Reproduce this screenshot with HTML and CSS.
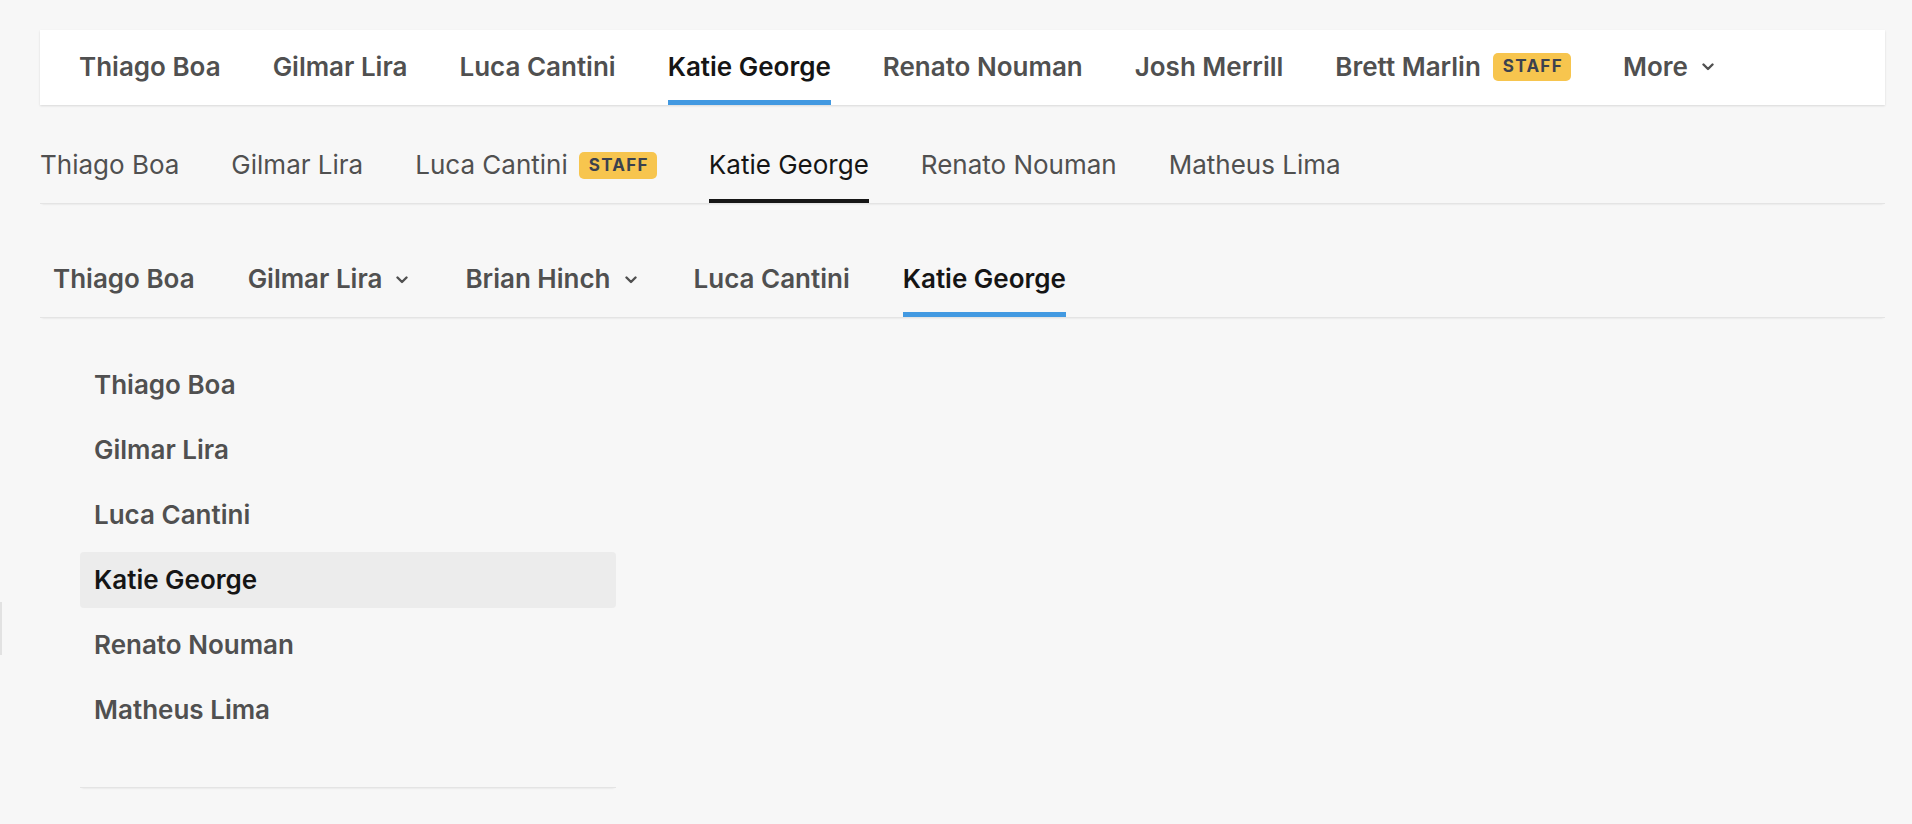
FILE: index.html
```html
<!DOCTYPE html>
<html lang="en">
<head>
<meta charset="utf-8">
<title>Tabs</title>
<link rel="stylesheet" href="styles.css">
</head>
<body>
<div class="edge-mark"></div>
<main class="page">
  <nav class="topbar">
    <a class="top-item">Thiago Boa</a>
    <a class="top-item">Gilmar Lira</a>
    <a class="top-item">Luca Cantini</a>
    <a class="top-item is-active">Katie George</a>
    <a class="top-item">Renato Nouman</a>
    <a class="top-item">Josh Merrill</a>
    <a class="top-item">Brett Marlin <span class="badge">STAFF</span></a>
    <a class="top-item">More <svg class="chev" viewBox="0 0 12 8" width="12" height="8"><path d="M1.5 1.5 L6 6 L10.5 1.5"/></svg></a>
  </nav>

  <nav class="plain-tabs">
    <a class="plain-item">Thiago Boa</a>
    <a class="plain-item">Gilmar Lira</a>
    <a class="plain-item">Luca Cantini <span class="badge">STAFF</span></a>
    <a class="plain-item is-active">Katie George</a>
    <a class="plain-item">Renato Nouman</a>
    <a class="plain-item">Matheus Lima</a>
  </nav>

  <nav class="bold-tabs">
    <a class="bold-item">Thiago Boa</a>
    <a class="bold-item">Gilmar Lira <svg class="chev" viewBox="0 0 12 8" width="12" height="8"><path d="M1.5 1.5 L6 6 L10.5 1.5"/></svg></a>
    <a class="bold-item">Brian Hinch <svg class="chev" viewBox="0 0 12 8" width="12" height="8"><path d="M1.5 1.5 L6 6 L10.5 1.5"/></svg></a>
    <a class="bold-item">Luca Cantini</a>
    <a class="bold-item is-active">Katie George</a>
  </nav>

  <nav class="side-list">
    <a class="side-item">Thiago Boa</a>
    <a class="side-item">Gilmar Lira</a>
    <a class="side-item">Luca Cantini</a>
    <a class="side-item is-active">Katie George</a>
    <a class="side-item">Renato Nouman</a>
    <a class="side-item">Matheus Lima</a>
  </nav>
</main>
</body>
</html>
```

FILE: styles.css
```css
* { box-sizing: border-box; }

html, body {
  margin: 0;
  padding: 0;
  background: #f7f7f7;
}

body {
  font-family: Inter, "Liberation Sans", sans-serif;
  font-size: 26px;
  color: #505050;
  position: relative;
  min-height: 824px;
}

a { cursor: pointer; }

.edge-mark {
  position: absolute;
  left: 0;
  top: 602px;
  width: 2px;
  height: 53px;
  background: #e2e2e2;
}

.page {
  padding: 30px 27px 0 40px;
}

/* ---------- top bar ---------- */
.topbar {
  display: flex;
  gap: 52px;
  height: 75px;
  padding-left: 39px;
  background: #ffffff;
  box-shadow: 0 1px 2px rgba(0, 0, 0, 0.12);
}

.top-item {
  position: relative;
  display: flex;
  align-items: center;
  padding-bottom: 2px;
  font-weight: 600;
  line-height: 32px;
  white-space: nowrap;
}

.top-item.is-active { color: #151515; }

.top-item.is-active::after {
  content: "";
  position: absolute;
  left: 0;
  right: 0;
  bottom: 0;
  height: 5px;
  background: #4299e1;
}

/* ---------- badge ---------- */
.badge {
  display: inline-flex;
  align-items: center;
  height: 28px;
  margin-left: 12px;
  padding: 0 8px 0 10px;
  border-radius: 5px;
  background: #f7c54e;
  color: #3b414e;
  font-size: 17px;
  font-weight: 700;
  letter-spacing: 1.3px;
  line-height: 1;
}

/* ---------- chevron ---------- */
.chev {
  margin-left: 14px;
  fill: none;
  stroke: currentColor;
  stroke-width: 2.4;
  stroke-linecap: round;
  stroke-linejoin: round;
}

/* ---------- plain tabs ---------- */
.plain-tabs {
  display: flex;
  gap: 52px;
  margin-top: 44px;
  border-bottom: 1px solid #e4e4e4;
  box-shadow: 0 2px 2px -2px rgba(0, 0, 0, 0.12);
}

.plain-item {
  position: relative;
  display: flex;
  align-items: center;
  padding-bottom: 22px;
  font-weight: 400;
  line-height: 32px;
  white-space: nowrap;
}

.plain-item .badge { height: 27px; margin-left: 11px; }

.plain-item.is-active { color: #151515; }

.plain-item.is-active::after {
  content: "";
  position: absolute;
  left: 0;
  right: 0;
  bottom: 0;
  height: 4px;
  background: #161616;
}

/* ---------- bold tabs ---------- */
.bold-tabs {
  display: flex;
  gap: 53px;
  margin-top: 59px;
  padding-left: 13px;
  border-bottom: 1px solid #e4e4e4;
  box-shadow: 0 2px 2px -2px rgba(0, 0, 0, 0.12);
}

.bold-item {
  position: relative;
  display: flex;
  align-items: center;
  padding-bottom: 22px;
  font-weight: 600;
  line-height: 32px;
  white-space: nowrap;
}

.bold-item .chev { margin-top: 2px; margin-right: 4px; }

.bold-item.is-active { color: #151515; }

.bold-item.is-active::after {
  content: "";
  position: absolute;
  left: 0;
  right: 0;
  bottom: 0;
  height: 5px;
  background: #4299e1;
}

/* ---------- side list ---------- */
.side-list {
  display: flex;
  flex-direction: column;
  gap: 9px;
  width: 536px;
  margin: 39px 0 0 40px;
  padding-bottom: 49px;
  border-bottom: 1px solid #e4e4e4;
  box-shadow: 0 2px 2px -2px rgba(0, 0, 0, 0.12);
}

.side-item {
  display: flex;
  align-items: center;
  height: 56px;
  padding-left: 14px;
  border-radius: 4px;
  font-weight: 600;
  line-height: 32px;
}

.side-item.is-active {
  background: #ececec;
  color: #151515;
}
```
